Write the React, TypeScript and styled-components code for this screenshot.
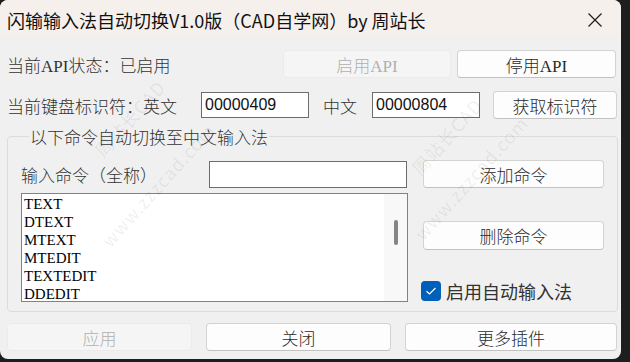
import React from "react";
import styled, { createGlobalStyle } from "styled-components";

const Global = createGlobalStyle`
  html, body { margin: 0; padding: 0; background: #1e1e1e; }
  body { width: 630px; height: 362px; overflow: hidden; }
`;

const SERIF = `"Liberation Serif", "Noto Sans CJK SC", serif`;
const SANS = `"Noto Sans CJK SC", "Noto Sans", sans-serif`;

const Window = styled.div`
  width: 621px;
  height: 359px;
  background: #f0f0f0;
  border-radius: 8px;
  overflow: hidden;
  display: flex;
  flex-direction: column;
  font-family: ${SERIF};
  color: #333;
  position: relative;
`;

const TitleBar = styled.div`
  height: 38px;
  flex: none;
  display: flex;
  align-items: center;
  justify-content: space-between;
  padding: 2px 0 0 7px;
  box-sizing: border-box;
  background: linear-gradient(#f6f0ed 0, #f6f0ed 30px, #f1efee 38px);
  font-family: ${SANS};
  font-size: 18px;
  color: #111;
`;

const CloseBtn = styled.div`
  width: 46px;
  height: 36px;
  display: flex;
  align-items: center;
  justify-content: center;
  margin-right: 3px;
`;

const Body = styled.div`
  flex: 1;
  display: flex;
  flex-direction: column;
  padding: 12px 4px 0 7px;
`;

const Row = styled.div<{ $h: number; $mt?: number }>`
  display: flex;
  align-items: center;
  height: ${(p) => p.$h}px;
  margin-top: ${(p) => p.$mt ?? 0}px;
`;

const Label = styled.span<{ $w?: number; $ml?: number }>`
  font-size: 17px;
  font-weight: 300;
  white-space: nowrap;
  ${(p) => (p.$w ? `width: ${p.$w}px;` : "")}
  margin-left: ${(p) => p.$ml ?? 0}px;
  flex: none;
`;

const Button = styled.div<{ $w: number; $h?: number; $ml?: number; $mt?: number; $disabled?: boolean }>`
  width: ${(p) => p.$w}px;
  height: ${(p) => p.$h ?? 28}px;
  margin-left: ${(p) => p.$ml ?? 0}px;
  margin-top: ${(p) => p.$mt ?? 0}px;
  flex: none;
  box-sizing: border-box;
  border: 1px solid ${(p) => (p.$disabled ? "#ebebeb" : "#d3d3d3")};
  border-bottom-color: ${(p) => (p.$disabled ? "#ebebeb" : "#c2c2c2")};
  border-radius: 4px;
  background: ${(p) => (p.$disabled ? "#f5f5f5" : "#fdfdfd")};
  color: ${(p) => (p.$disabled ? "#b0b0b0" : "#2a2a2a")};
  font-family: ${SERIF};
  font-size: 17px;
  font-weight: 300;
  display: flex;
  align-items: center;
  justify-content: center;
`;

const Input = styled.div<{ $w: number; $h?: number; $ml?: number }>`
  width: ${(p) => p.$w}px;
  height: ${(p) => p.$h ?? 26}px;
  margin-left: ${(p) => p.$ml ?? 0}px;
  flex: none;
  box-sizing: border-box;
  border: 1px solid #6d6d6d;
  background: #fff;
  font-family: "Liberation Sans", sans-serif;
  font-size: 16px;
  color: #111;
  display: flex;
  align-items: center;
  padding-left: 3px;
`;

const Group = styled.fieldset`
  margin: 4px 0 0 0;
  padding: 0 0 7px 13px;
  border: 1px solid #dcdcdc;
  border-radius: 4px;
  width: 611px;
  box-sizing: border-box;
  display: flex;
`;

const Legend = styled.legend`
  font-size: 17px;
  font-weight: 300;
  padding: 0 1px;
  margin-left: 8px;
  color: #333;
`;

const LeftCol = styled.div`
  display: flex;
  flex-direction: column;
  width: 388px;
  padding-top: 12px;
`;

const RightCol = styled.div`
  display: flex;
  flex-direction: column;
  margin-left: 14px;
  padding-top: 11px;
`;

const ListBox = styled.div`
  margin-top: 5px;
  height: 109px;
  width: 387px;
  box-sizing: border-box;
  border: 1px solid #828282;
  background: #fff;
  display: flex;
  overflow: hidden;
`;

const ListItems = styled.div`
  flex: 1;
  padding: 1px 0 0 2px;
  font-family: "Liberation Serif", serif;
  font-size: 15px;
  line-height: 18px;
  color: #000;
`;

const Track = styled.div`
  width: 23px;
  background: #f8f8f8;
  display: flex;
  justify-content: center;
  padding-top: 26px;
`;

const Thumb = styled.div`
  width: 4px;
  height: 25px;
  border-radius: 2px;
  background: #858585;
`;

const CheckRow = styled.div`
  display: flex;
  align-items: center;
  margin-top: 28px;
  margin-left: -2px;
  font-family: ${SANS};
  font-size: 18px;
  color: #333;
`;

const CheckBox = styled.div`
  width: 20px;
  height: 20px;
  border-radius: 4px;
  background: #005fb8;
  display: flex;
  align-items: center;
  justify-content: center;
  margin-right: 5px;
`;

const BottomRow = styled.div`
  display: flex;
  margin-top: 11px;
`;

const Watermark = styled.div<{ $x: number; $y: number }>`
  position: absolute;
  left: ${(p) => p.$x}px;
  top: ${(p) => p.$y}px;
  transform: rotate(-48deg);
  transform-origin: left bottom;
  pointer-events: none;
  font-family: ${SANS};
  font-size: 18px;
  line-height: 20px;
  letter-spacing: 1px;
  color: rgba(0, 0, 0, 0.07);
  white-space: nowrap;
`;

const marks = [
  { x: 105, y: 140, t: "周站长CAD" },
  { x: 112, y: 230, t: "www.zzzcad.com" },
  { x: 422, y: 158, t: "周站长CAD" },
  { x: 425, y: 223, t: "www.zzzcad.com" },
];

export default function App() {
  return (
    <>
      <Global />
      <Window>
        <TitleBar>
          <span>闪输输入法自动切换V1.0版（CAD自学网）by 周站长</span>
          <CloseBtn>
            <svg width="16" height="16" viewBox="0 0 16 16">
              <path d="M1.5 1.5 L14.5 14.5 M14.5 1.5 L1.5 14.5" stroke="#222" strokeWidth="1.3" />
            </svg>
          </CloseBtn>
        </TitleBar>
        <Body>
          <Row $h={28}>
            <Label $w={276}>当前API状态：已启用</Label>
            <Button $w={168} $disabled>启用API</Button>
            <Button $w={159} $ml={6}>停用API</Button>
          </Row>
          <Row $h={30} $mt={12}>
            <Label $w={194}>当前键盘标识符：英文</Label>
            <Input $w={108}>00000409</Input>
            <Label $w={49} $ml={14}>中文</Label>
            <Input $w={108}>00000804</Input>
            <Button $w={124} $ml={13} $h={28}>获取标识符</Button>
          </Row>
          <Group>
            <Legend>以下命令自动切换至中文输入法</Legend>
            <LeftCol>
              <Row $h={27}>
                <Label $w={188}>输入命令（全称）</Label>
                <Input $w={198} $h={27} />
              </Row>
              <ListBox>
                <ListItems>
                  <div>TEXT</div>
                  <div>DTEXT</div>
                  <div>MTEXT</div>
                  <div>MTEDIT</div>
                  <div>TEXTEDIT</div>
                  <div>DDEDIT</div>
                </ListItems>
                <Track>
                  <Thumb />
                </Track>
              </ListBox>
            </LeftCol>
            <RightCol>
              <Button $w={181} $h={28}>添加命令</Button>
              <Button $w={181} $h={29} $mt={33}>删除命令</Button>
              <CheckRow>
                <CheckBox>
                  <svg width="12" height="10" viewBox="0 0 12 10">
                    <path d="M1.5 5.2 L4.5 8 L10.5 2" stroke="#fff" strokeWidth="1.2" fill="none" />
                  </svg>
                </CheckBox>
                <span>启用自动输入法</span>
              </CheckRow>
            </RightCol>
          </Group>
          <BottomRow>
            <Button $w={185} $disabled>应用</Button>
            <Button $w={185} $ml={14}>关闭</Button>
            <Button $w={212} $ml={14}>更多插件</Button>
          </BottomRow>
        </Body>
        {marks.map((m, i) => (
          <Watermark key={i} $x={m.x} $y={m.y}>
            {m.t}
          </Watermark>
        ))}
      </Window>
    </>
  );
}
